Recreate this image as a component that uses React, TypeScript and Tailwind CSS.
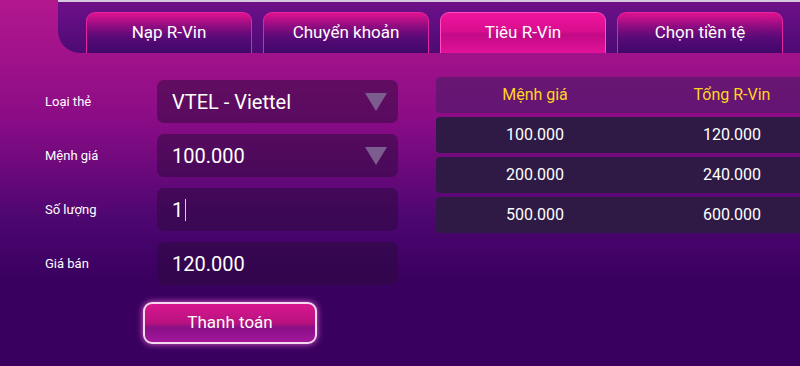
import React from 'react';

const tabs = ['Nạp R-Vin', 'Chuyển khoản', 'Tiêu R-Vin', 'Chọn tiền tệ'];

const rows = [
  ['100.000', '120.000'],
  ['200.000', '240.000'],
  ['500.000', '600.000'],
];

const Caret: React.FC = () => (
  <svg width="24" height="20" viewBox="0 0 24 20" className="shrink-0">
    <path d="M1 1h22L12 19z" fill="#7d5d8f" />
  </svg>
);

const Field: React.FC<{ label: string; children: React.ReactNode }> = ({ label, children }) => (
  <div className="flex items-center h-[43px]">
    <div className="w-[157px] shrink-0 pl-[45px] text-[13px] text-white">{label}</div>
    <div className="w-[241px] shrink-0 h-[43px] rounded-[7px] bg-[#2a0a3a]/50 flex items-center pl-[15px] pr-[10px] text-[20px] text-white">
      {children}
    </div>
  </div>
);

export default function App() {
  return (
    <div
      className="w-[800px] h-[366px] overflow-hidden relative bg-[linear-gradient(180deg,#b3178e_0px,#8a0c86_120px,#4c0670_220px,#3a0060_280px,#3a0060_366px)]"
      style={{ fontFamily: 'Roboto, "Noto Sans", sans-serif' }}
    >
      {/* header strip */}
      <div className="ml-[58px] h-[53px] rounded-bl-[22px] bg-[linear-gradient(180deg,#6e1089,#4d0a74)] border-t-2 border-[#d7c8dd] flex items-end pl-[28px] gap-[11px]">
        {tabs.map((t, i) => (
          <div
            key={t}
            className={
              'w-[166px] shrink-0 h-[41px] rounded-t-[9px] flex items-center justify-center text-[17px] text-white border-x border-t ' +
              (i === 2
                ? 'border-[#ff4cc0] bg-[linear-gradient(180deg,#f0159c_0%,#d80d8f_45%,#c20a86_55%,#e3129a_100%)]'
                : 'border-[#e3259e] bg-[linear-gradient(180deg,#e0118f_0%,#8a0c80_35%,#5a0a78_60%,#3f0868_100%)]')
            }
          >
            {t}
          </div>
        ))}
      </div>

      <div className="flex mt-[24px]">
        {/* form */}
        <div className="w-[436px] shrink-0 flex flex-col gap-[11px] pt-[3px]">
          <Field label="Loại thẻ">
            <span className="flex-1">VTEL - Viettel</span>
            <Caret />
          </Field>
          <Field label="Mệnh giá">
            <span className="flex-1">100.000</span>
            <Caret />
          </Field>
          <Field label="Số lượng">
            <span>1</span>
            <span className="w-px h-[22px] bg-white/80 ml-[2px]" />
          </Field>
          <Field label="Giá bán">
            <span>120.000</span>
          </Field>
          <div className="pl-[143px] pt-[6px]">
            <button className="w-[174px] h-[42px] rounded-[9px] border-2 border-[#f6d8f0] bg-[linear-gradient(180deg,#d9168f_0%,#b8127f_50%,#8a0f86_62%,#a2179c_100%)] text-white text-[17px] shadow-[0_0_6px_#e060c8]">
              Thanh toán
            </button>
          </div>
        </div>

        {/* table */}
        <div className="flex flex-col gap-[4px] w-[400px] shrink-0">
          <div className="h-[36px] rounded-[4px] bg-[#4a1a66]/60 grid grid-cols-[198px_196px] items-center text-[16px] text-[#ffd61f]">
            <div className="text-center">Mệnh giá</div>
            <div className="text-center">Tổng R-Vin</div>
          </div>
          {rows.map(([a, b]) => (
            <div key={a} className="h-[36px] rounded-[4px] bg-[#2e1a45] grid grid-cols-[198px_196px] items-center text-[16px] text-white">
              <div className="text-center">{a}</div>
              <div className="text-center">{b}</div>
            </div>
          ))}
        </div>
      </div>
    </div>
  );
}
